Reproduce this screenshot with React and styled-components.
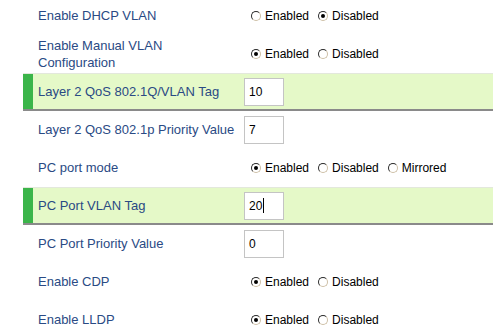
import React from "react";
import styled, { createGlobalStyle } from "styled-components";

const Global = createGlobalStyle`
  html, body { margin: 0; padding: 0; background: #ffffff; overflow: hidden; }
  body { font-family: "Liberation Sans", Arial, sans-serif; }
`;

const Page = styled.div`
  padding-left: 23px;
  margin-top: -3px;
`;

const Table = styled.div`
  display: flex;
  flex-direction: column;
`;

const Row = styled.div`
  display: flex;
  align-items: stretch;
  height: 38px;
  box-sizing: border-box;
  background: ${(p) => (p.$hl ? "#e5f9c8" : "transparent")};
  border-top: 1px solid ${(p) => (p.$hl ? "#e3e8dc" : "transparent")};
  border-bottom: 2px solid ${(p) => (p.$hl ? "#8a8a8a" : "transparent")};
`;

const Marker = styled.div`
  width: 10px;
  flex: none;
  background: ${(p) => (p.$hl ? "#3bb54a" : "transparent")};
`;

const Label = styled.div`
  width: 200px;
  flex: none;
  padding: 0 6px 0 5px;
  display: flex;
  align-items: center;
  font-size: 13px;
  line-height: 17px;
  color: #2a4a84;
`;

const Control = styled.div`
  flex: 1;
  display: flex;
  align-items: center;
  font-size: 12px;
  color: #000;
`;

const Field = styled.div`
  width: 40px;
  height: 28px;
  box-sizing: border-box;
  border: 1px solid #c4c4c4;
  background: #fff;
  display: flex;
  align-items: center;
  padding-left: 4px;
  font-size: 12px;
  color: #000;
`;

const Caret = styled.span`
  display: inline-block;
  width: 1px;
  height: 15px;
  background: #000;
  margin-left: 1px;
`;

const Option = styled.label`
  display: inline-flex;
  align-items: center;
  margin-left: ${(p) => (p.$first ? "7px" : "9px")};
  gap: 4px;
`;

const Radio = styled.span`
  width: 10px;
  height: 10px;
  box-sizing: border-box;
  border-radius: 50%;
  border: 1px solid;
  border-color: #2b2b2b #cdbfa6 #cdbfa6 #2b2b2b;
  background: #fff;
  display: inline-flex;
  align-items: center;
  justify-content: center;
  &::after {
    content: "";
    width: 4px;
    height: 4px;
    border-radius: 50%;
    background: ${(p) => (p.$on ? "#000" : "transparent")};
  }
`;

const rows = [
  { label: "Enable DHCP VLAN", opts: ["Enabled", "Disabled"], sel: 1 },
  { label: "Enable Manual VLAN Configuration", opts: ["Enabled", "Disabled"], sel: 0 },
  { label: "Layer 2 QoS 802.1Q/VLAN Tag", value: "10", hl: true },
  { label: "Layer 2 QoS 802.1p Priority Value", value: "7" },
  { label: "PC port mode", opts: ["Enabled", "Disabled", "Mirrored"], sel: 0 },
  { label: "PC Port VLAN Tag", value: "20", hl: true, caret: true },
  { label: "PC Port Priority Value", value: "0" },
  { label: "Enable CDP", opts: ["Enabled", "Disabled"], sel: 0 },
  { label: "Enable LLDP", opts: ["Enabled", "Disabled"], sel: 0 },
];

export default function App() {
  return (
    <>
      <Global />
      <Page>
        <Table>
          {rows.map((r) => (
            <Row key={r.label} $hl={r.hl}>
              <Marker $hl={r.hl} />
              <Label>{r.label}</Label>
              <Control>
                {r.opts ? (
                  r.opts.map((o, i) => (
                    <Option key={o} $first={i === 0}>
                      <Radio $on={i === r.sel} />
                      {o}
                    </Option>
                  ))
                ) : (
                  <Field>
                    {r.value}
                    {r.caret && <Caret />}
                  </Field>
                )}
              </Control>
            </Row>
          ))}
        </Table>
      </Page>
    </>
  );
}
